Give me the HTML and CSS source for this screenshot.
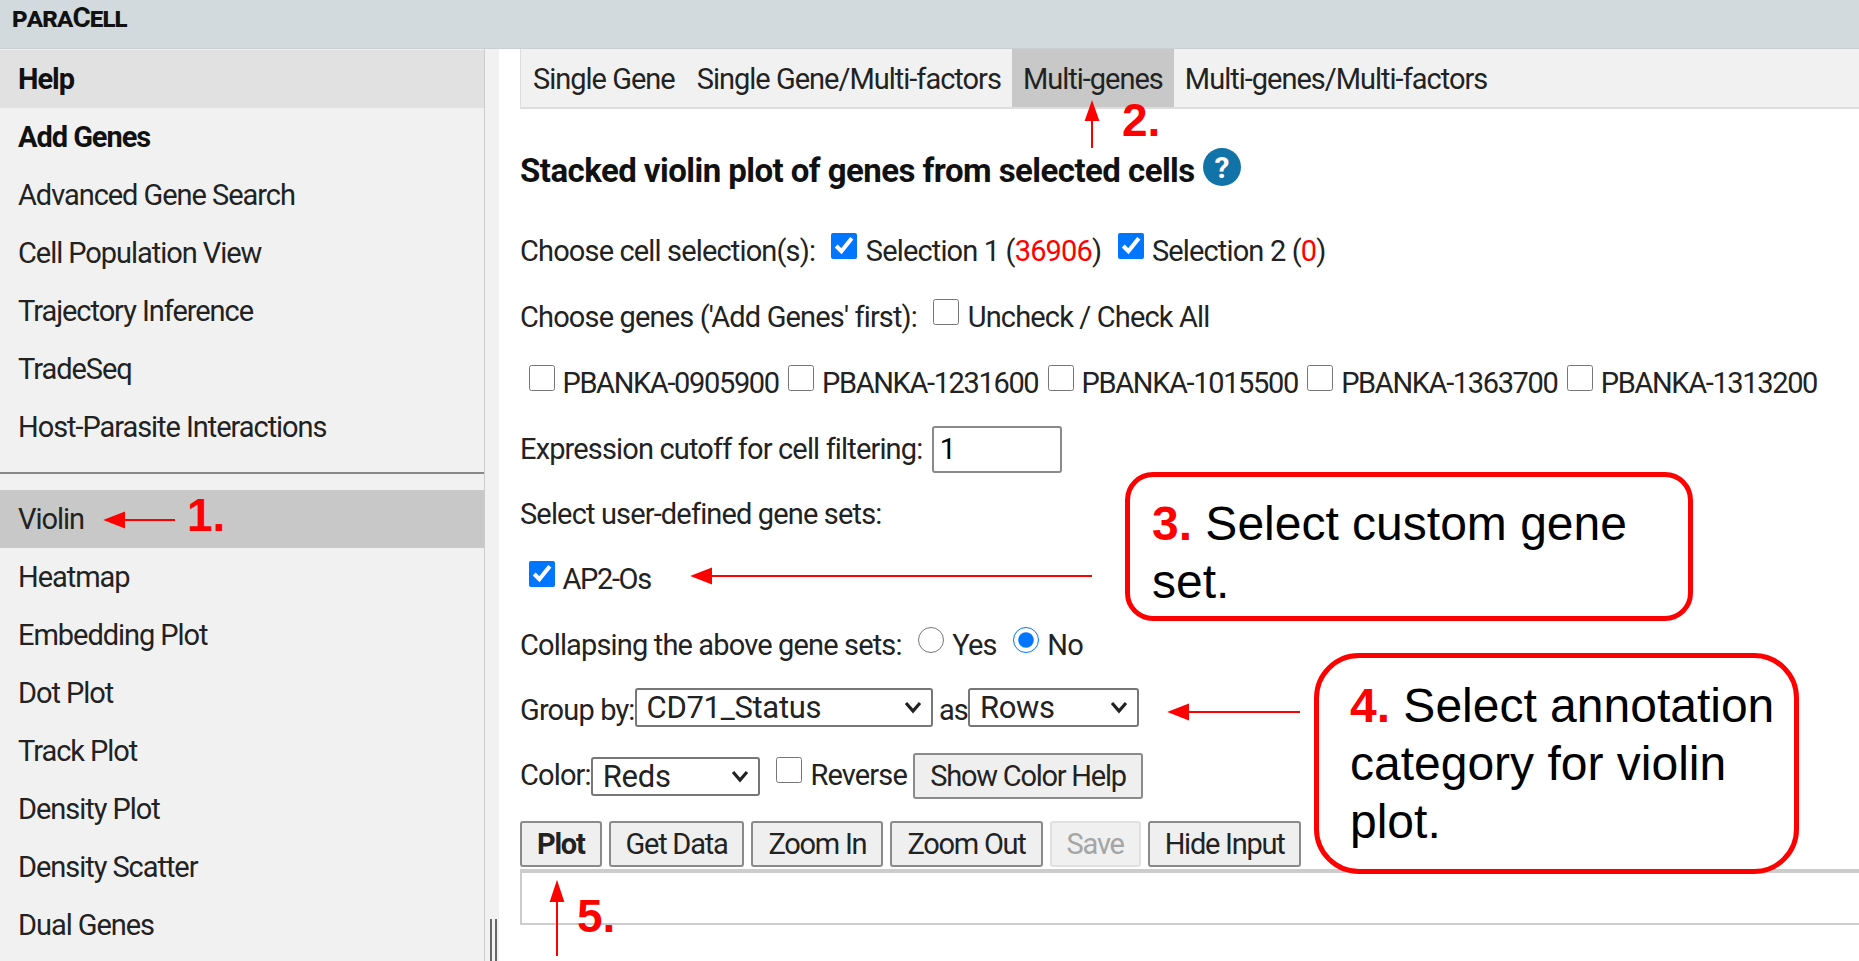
FILE: index.html
```html
<!DOCTYPE html>
<html lang="en">
<head>
  <meta charset="UTF-8">
  <meta name="viewport" content="width=device-width, initial-scale=1.0">
  <title>ParaCell</title>
  <link rel="stylesheet" href="styles.css">
</head>
<body>
  <header class="topbar"><span class="logo">paraCell</span></header>

  <div class="layout">
    <nav class="sidebar">
      <a class="nav-item bold current">Help</a>
      <a class="nav-item bold">Add Genes</a>
      <a class="nav-item">Advanced Gene Search</a>
      <a class="nav-item">Cell Population View</a>
      <a class="nav-item">Trajectory Inference</a>
      <a class="nav-item">TradeSeq</a>
      <a class="nav-item">Host-Parasite Interactions</a>
      <hr class="nav-sep">
      <a class="nav-item active">Violin</a>
      <a class="nav-item">Heatmap</a>
      <a class="nav-item">Embedding Plot</a>
      <a class="nav-item">Dot Plot</a>
      <a class="nav-item">Track Plot</a>
      <a class="nav-item">Density Plot</a>
      <a class="nav-item">Density Scatter</a>
      <a class="nav-item">Dual Genes</a>
    </nav>
    <div class="splitter"><span class="grip"></span></div>

    <main class="content">
      <div class="tabs">
        <a class="tab">Single Gene</a>
        <a class="tab">Single Gene/Multi-factors</a>
        <a class="tab selected">Multi-genes</a>
        <a class="tab">Multi-genes/Multi-factors</a>
      </div>

      <h2 class="title">Stacked violin plot of genes from selected cells <span class="help-icon">?</span></h2>

      <div class="row">Choose cell selection(s):
        <input type="checkbox" class="first" checked> Selection 1 (<span class="red">36906</span>)
        <input type="checkbox" class="first" checked> Selection 2 (<span class="red">0</span>)
      </div>
      <div class="row">Choose genes ('Add Genes' first):
        <input type="checkbox" class="first"> Uncheck / Check All
      </div>
      <div class="row indent">
        <input type="checkbox"> PBANKA-0905900
        <input type="checkbox"> PBANKA-1231600
        <input type="checkbox"> PBANKA-1015500
        <input type="checkbox"> PBANKA-1363700
        <input type="checkbox"> PBANKA-1313200
      </div>
      <div class="row">Expression cutoff for cell filtering: <input type="text" class="num" value="1"></div>
      <div class="row short">Select user-defined gene sets:</div>
      <div class="row indent"><input type="checkbox" checked> AP2-Os</div>
      <div class="row">Collapsing the above gene sets:
        <input type="radio" name="collapse" class="first"> Yes
        <input type="radio" name="collapse" class="first" checked> No
      </div>
      <div class="row short">Group by:<select class="sel sel-group"><option>CD71_Status</option></select>
        <span class="as">as</span><select class="sel sel-rows"><option>Rows</option></select>
      </div>
      <div class="row tall">Color:<select class="sel sel-color"><option>Reds</option></select>
        <input type="checkbox" class="first"> Reverse
        <button class="btn help-btn">Show Color Help</button>
      </div>
      <div class="buttons">
        <button class="btn plot">Plot</button>
        <button class="btn">Get Data</button>
        <button class="btn">Zoom In</button>
        <button class="btn">Zoom Out</button>
        <button class="btn" disabled>Save</button>
        <button class="btn">Hide Input</button>
      </div>
      <div class="output"></div>
    </main>
  </div>

  <!-- annotations drawn on top of the screenshot -->
  <svg class="arrows" width="1859" height="961" viewBox="0 0 1859 961">
    <g stroke="#f00" stroke-width="2" fill="#f00">
      <line x1="175" y1="520" x2="120" y2="520"/><polygon points="106,520 124,513 124,527"/>
      <line x1="1092" y1="148" x2="1092" y2="118"/><polygon points="1092,103 1086,120 1098,120"/>
      <line x1="1092" y1="576" x2="707" y2="576"/><polygon points="693,576 711,569 711,583"/>
      <line x1="1300" y1="712" x2="1184" y2="712"/><polygon points="1170,712 1188,705 1188,719"/>
      <line x1="557" y1="956" x2="557" y2="898"/><polygon points="557,883 551,901 563,901"/>
    </g>
  </svg>
  <span class="mark mark-1">1.</span>
  <span class="mark mark-2">2.</span>
  <span class="mark mark-5">5.</span>
  <div class="callout callout-3"><b>3.</b> Select custom gene set.</div>
  <div class="callout callout-4"><b>4.</b> Select annotation category for violin plot.</div>
</body>
</html>
```

FILE: styles.css
```css
html, body {
  margin: 0;
  height: 961px;
  overflow: hidden;
}
body {
  position: relative;
  background: #fff;
  font-family: Roboto, "Noto Sans", sans-serif;
  font-size: 29px;
  letter-spacing: -0.85px;
  color: #222;
}

.topbar {
  height: 49px;
  background: #d3dadd;
  border-bottom: 1px solid #c9d0d3;
  box-sizing: border-box;
  padding-left: 12px;
}
.logo {
  font-variant: small-caps;
  font-weight: 700;
  font-size: 28px;
  letter-spacing: -0.9px;
  line-height: 34px;
  color: #111;
}

.layout {
  display: flex;
  height: 912px;
}
.sidebar {
  width: 484px;
  flex: none;
  padding-top: 1px;
  box-sizing: content-box;
  background: #f1f1f1;
  border-right: 1px solid #ccc;
  overflow: hidden;
  letter-spacing: -1.05px;
}
.nav-item {
  display: flex;
  align-items: center;
  height: 58px;
  padding-left: 18px;
  color: #222;
}
.nav-item.bold {
  font-weight: 700;
  color: #111;
}
.nav-item.current {
  background: #e1e1e1;
}
.nav-item.active {
  background: #c8c8c8;
}
.nav-sep {
  margin: 16px 0;
  border: 0;
  border-top: 2px solid #888;
}
.splitter {
  width: 14px;
  flex: none;
  background: #f1f1f1;
  position: relative;
}
.grip {
  position: absolute;
  left: 5px;
  bottom: 0;
  width: 3px;
  height: 42px;
  border-left: 2px solid #666;
  border-right: 2px solid #666;
}

.content {
  flex: 1;
  min-width: 0;
  padding-left: 21px;
}
.tabs {
  display: flex;
  height: 60px;
  box-sizing: border-box;
  background: #f1f1f1;
  border-left: 1px solid #ddd;
  border-bottom: 2px solid #ddd;
  letter-spacing: -1px;
}
.tab {
  display: flex;
  align-items: center;
  padding: 2px 11px 0;
}
.tab:first-child {
  padding-left: 12px;
}
.tab.selected {
  background: #c8c8c8;
}

.title {
  margin: 37px 0 24px;
  height: 48px;
  font-size: 33px;
  letter-spacing: -0.55px;
  font-weight: 700;
  color: #111;
  display: flex;
  align-items: center;
  gap: 8px;
}
.help-icon {
  width: 38px;
  height: 38px;
  border-radius: 50%;
  background: #1273a8;
  color: #fff;
  font-size: 30px;
  display: flex;
  align-items: center;
  justify-content: center;
  position: relative;
  top: -3px;
}

.row {
  display: block;
  height: 66px;
  line-height: 66px;
  white-space: nowrap;
}
.row.short {
  height: 64px;
  line-height: 64px;
}
.row.tall {
  height: 67px;
  line-height: 67px;
}
.indent {
  padding-left: 5px;
  letter-spacing: -1.35px;
}
.row input[type=checkbox], .row input[type=radio] {
  width: 26px;
  height: 26px;
  margin: 0 2px 0 3.6px;
  vertical-align: 2px;
  accent-color: #0075ff;
}
.row input.first {
  margin-left: 10px;
}
.red {
  color: #f00;
}
.num {
  width: 130px;
  height: 47px;
  margin-left: 3px;
  margin-bottom: 4px;
  box-sizing: border-box;
  font: inherit;
  letter-spacing: normal;
  padding: 0 6px;
  vertical-align: middle;
  border: 2px solid #8a8a8a;
  border-radius: 3px;
}
.sel {
  appearance: none;
  height: 39px;
  margin-bottom: 10px;
  box-sizing: border-box;
  font: inherit;
  font-size: 31px;
  letter-spacing: -0.3px;
  line-height: 36px;
  padding: 0 2px 0 10px;
  color: #222;
  background: #fff url("data:image/svg+xml,%3Csvg xmlns='http://www.w3.org/2000/svg' width='20' height='14'%3E%3Cpath d='M3 3l7 8 7-8' fill='none' stroke='%23222' stroke-width='3.2'/%3E%3C/svg%3E") no-repeat right 8px center;
  border: 2px solid #777;
  border-radius: 3px;
  vertical-align: middle;
}
.sel-group { width: 298px; }
.sel-rows { width: 171px; }
.sel-color {
  width: 169px;
  margin-bottom: 2px;
}

.btn {
  height: 46px;
  padding: 0 15px;
  box-sizing: border-box;
  font: inherit;
  letter-spacing: -1.25px;
  line-height: 40px;
  color: #222;
  background: #efefef;
  border: 2px solid #8a8a8a;
  border-radius: 3px;
}
.btn:disabled {
  color: #a5a5a5;
  background: #f0f0f0;
  border-color: #e0e0e0;
}
.btn.plot {
  font-weight: 700;
}
.help-btn {
  margin-bottom: 2px;
  vertical-align: middle;
}
.buttons {
  display: flex;
  gap: 7px;
  margin-top: 12px;
}
.output {
  height: 56px;
  margin-top: 2px;
  box-sizing: border-box;
  border: 2px solid #ccc;
  border-top-width: 4px;
  border-right: 0;
}

.arrows {
  position: absolute;
  left: 0;
  top: 0;
  pointer-events: none;
}
.mark {
  position: absolute;
  font-family: "Liberation Sans", Arial, sans-serif;
  letter-spacing: normal;
  font-weight: 700;
  font-size: 46px;
  line-height: 46px;
  color: #f00;
}
.mark-1 { left: 187px; top: 492px; }
.mark-2 { left: 1122px; top: 97px; }
.mark-5 { left: 577px; top: 893px; }

.callout {
  position: absolute;
  box-sizing: border-box;
  background: #fff;
  border: 5px solid #f00;
  font-family: "Liberation Sans", Arial, sans-serif;
  letter-spacing: normal;
  font-size: 48px;
  line-height: 58px;
  color: #000;
}
.callout b {
  color: #f00;
}
.callout-3 {
  left: 1125px;
  top: 472px;
  width: 568px;
  height: 149px;
  border-radius: 28px;
  padding: 18px 22px 0;
}
.callout-4 {
  left: 1314px;
  top: 653px;
  width: 485px;
  height: 221px;
  border-radius: 45px;
  padding: 19px 10px 0 31px;
}
```
